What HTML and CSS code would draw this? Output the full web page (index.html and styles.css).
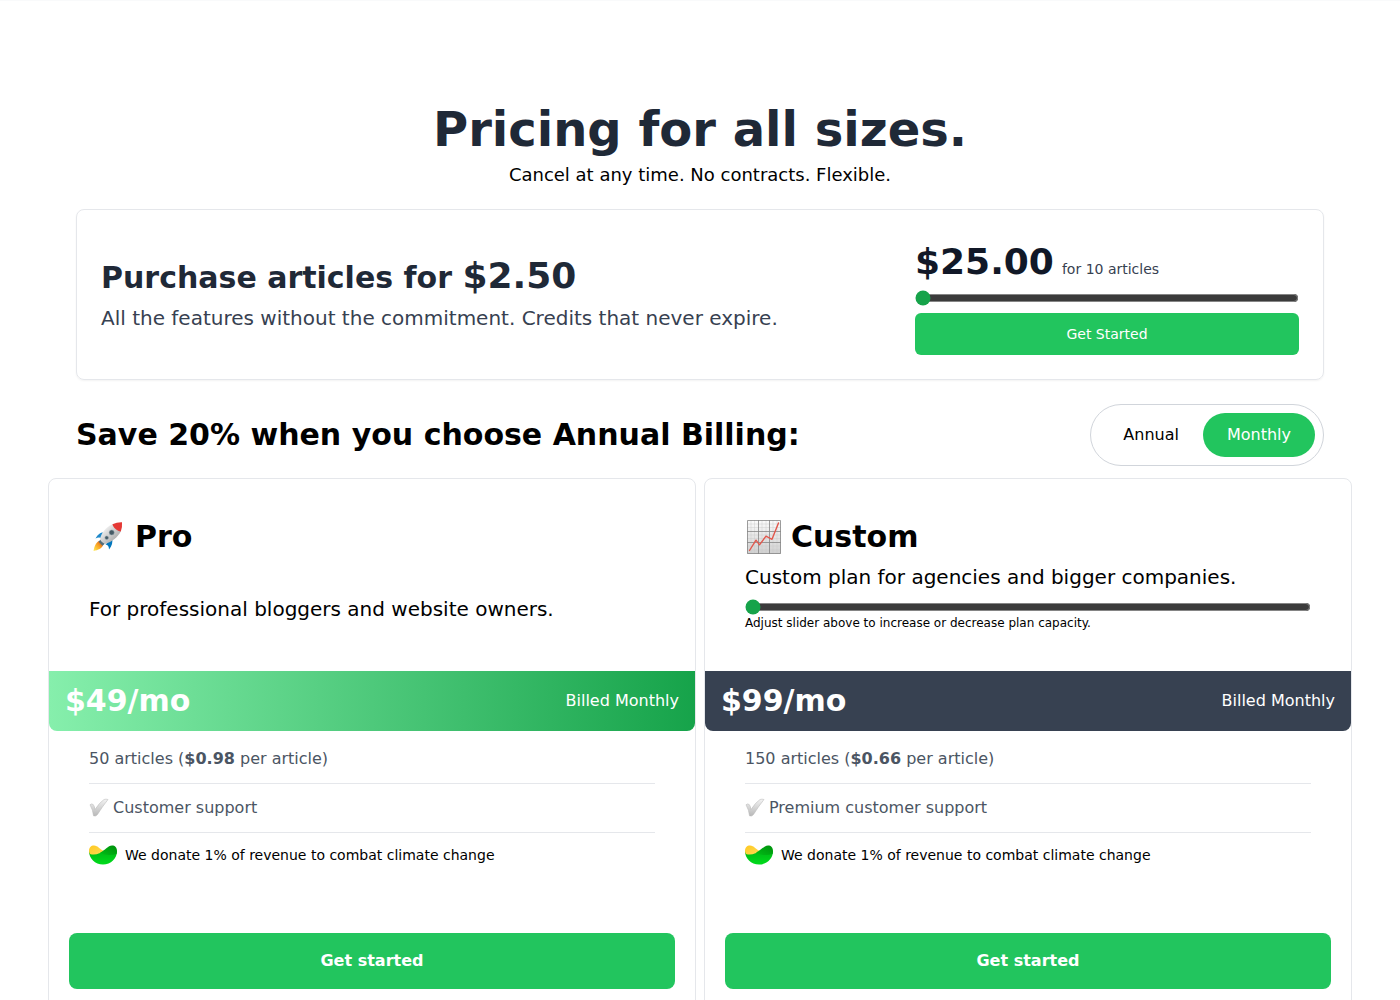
FILE: index.html
```
<!DOCTYPE html>
<html lang="en">
<head>
    <meta charset="UTF-8">
    <meta name="viewport" content="width=device-width, initial-scale=1.0">
    <title>Pricing</title>
    <link rel="stylesheet" href="styles.css">
</head>
<body>
    <main class="pricing">
        <header class="intro">
            <h1>Pricing for all sizes.</h1>
            <p>Cancel at any time. No contracts. Flexible.</p>
        </header>

        <section class="credits">
            <div class="credits-text">
                <h2>Purchase articles for <span class="unit-price">$2.50</span></h2>
                <p>All the features without the commitment. Credits that never expire.</p>
            </div>
            <div class="credits-buy">
                <div class="credits-total">
                    <strong id="credits-price">$25.00</strong>
                    <label for="credits-range">for <span id="credits-count">10</span> articles</label>
                </div>
                <input type="range" id="credits-range" class="slider" min="10" max="500" step="10" value="10">
                <button type="button" class="buy-btn">Get Started</button>
            </div>
        </section>

        <section class="billing">
            <h2>Save 20% when you choose Annual Billing:</h2>
            <div class="toggle">
                <button type="button" class="toggle-btn" aria-pressed="false">Annual</button>
                <button type="button" class="toggle-btn active" aria-pressed="true">Monthly</button>
            </div>
        </section>

        <section class="plans">
            <article class="plan">
                <div class="plan-head">
                    <h2>
                        <svg class="plan-icon" viewBox="0 0 36 36" aria-hidden="true">
                            <defs>
                                <linearGradient id="hull" x1="0" y1="0" x2="1" y2="1">
                                    <stop offset="0.200" stop-color="#f2f2f2"/>
                                    <stop offset="0.800" stop-color="#a9a9a9"/>
                                </linearGradient>
                                <linearGradient id="flame" x1="1" y1="0" x2="0" y2="1">
                                    <stop offset="0" stop-color="#d84315"/>
                                    <stop offset="0.500" stop-color="#f9a825"/>
                                    <stop offset="1" stop-color="#ffee58"/>
                                </linearGradient>
                            </defs>
                            <path fill="#1e88c9" d="M17 13C12 13 9 15 6.500 19.500C9 18.200 11 18.200 13 19.500Z"/>
                            <path fill="#0277bd" d="M23 19C24 23 23 27 20 30.500C20 27.500 19 26 16.500 25.500Z"/>
                            <path fill="url(#flame)" d="M10 22C6.500 24 5.500 27 4.500 32C9 31 13 29.500 14 26Z"/>
                            <path fill="#546e7a" d="M11.500 20.500L15.800 24.700L13.500 26.800L9.500 22.800Z"/>
                            <path fill="url(#hull)" d="M24 5C17 8 12 14 11 20.500Q12.500 23.500 16 25C23 23 29 18 32 12Z"/>
                            <path fill="#e53935" d="M23.500 5.200Q28 3 33 3.200Q33.500 8 31.800 12.500C28.500 12 24 8.500 23.500 5.200Z"/>
                            <circle fill="#455a64" stroke="#90a4ae" stroke-width="0.500" cx="22.700" cy="13.500" r="2.500"/>
                            <circle fill="#455a64" stroke="#90a4ae" stroke-width="0.500" cx="17.700" cy="18.800" r="1.800"/>
                        </svg>
                        Pro
                    </h2>
                    <div class="plan-about">
                        <p class="plan-desc">For professional bloggers and website owners.</p>
                    </div>
                </div>
                <div class="plan-price pro">
                    <strong>$49/mo</strong>
                    <span>Billed Monthly</span>
                </div>
                <ul class="features">
                    <li>50 articles (<b>$0.98</b> per article)</li>
                    <li class="support">
                        <svg class="check-icon" viewBox="0 0 20 20" aria-hidden="true">
                            <defs>
                                <linearGradient id="check" x1="0" y1="0" x2="0" y2="1">
                                    <stop offset="0" stop-color="#f3f3f3"/>
                                    <stop offset="1" stop-color="#b8b8b8"/>
                                </linearGradient>
                            </defs>
                            <path fill="url(#check)" stroke="#b5b5b5" stroke-width="0.500" d="M1 6.800Q2.500 5.200 4.200 6.500Q5.500 8 6 11.500Q10.500 4.500 15 1.500Q17 0.800 19 1.500Q13 9 8.500 16.500Q6.500 18.800 4.500 17.800Q4 12 1 6.800Z"/>
                        </svg>
                        Customer support
                    </li>
                    <li class="climate">
                        <svg class="climate-icon" viewBox="0 0 28 20" aria-hidden="true">
                            <defs>
                                <linearGradient id="bowl" x1="0" y1="0" x2="0" y2="1">
                                    <stop offset="0" stop-color="#00b815"/>
                                    <stop offset="1" stop-color="#00dc1c"/>
                                </linearGradient>
                                <linearGradient id="leaf" x1="1" y1="0" x2="0" y2="1">
                                    <stop offset="0" stop-color="#008f0c"/>
                                    <stop offset="1" stop-color="#00bd16"/>
                                </linearGradient>
                                <linearGradient id="sun" x1="0" y1="0" x2="1" y2="1">
                                    <stop offset="0" stop-color="#ffc820"/>
                                    <stop offset="1" stop-color="#ffdc58"/>
                                </linearGradient>
                            </defs>
                            <path fill="url(#bowl)" d="M0 6C0 13.500 6 19.500 14 19.500S28 13.500 28 6L14 7 8 7Z"/>
                            <path fill="url(#sun)" d="M0 6C0 2.500 2 0.500 5 0.500C9 0.500 11 4.500 14 5.500L16 6.500C11 7.500 7 11 1 9Q0 7.500 0 6Z"/>
                            <path fill="url(#leaf)" d="M28 6C28 2.500 26 0.500 23 0.500C19 0.500 16 5.500 11 7.500C16 10.500 22 10.500 27.500 9Q28 7.500 28 6Z"/>
                        </svg>
                        We donate 1% of revenue to combat climate change
                    </li>
                </ul>
                <button type="button" class="plan-btn">Get started</button>
            </article>

            <article class="plan">
                <div class="plan-head">
                    <h2>
                        <svg class="plan-icon" viewBox="0 0 36 36" aria-hidden="true">
                            <defs>
                                <linearGradient id="sheet" x1="0" y1="0" x2="0" y2="1">
                                    <stop offset="0" stop-color="#fcfcfc"/>
                                    <stop offset="1" stop-color="#cfcfcf"/>
                                </linearGradient>
                            </defs>
                            <path fill="url(#sheet)" d="M2 1H36V35H2Z"/>
                            <path fill="none" stroke="#c8c8c8" stroke-width="0.400" d="M2 5H36M2 8.500H36M2 16H36M2 19.500H36M2 27H36M2 31H36M6 1V35M9.500 1V35M17 1V35M21 1V35M28 1V35M32 1V35"/>
                            <path fill="none" stroke="#858585" stroke-width="0.800" d="M2 12.500H36M2 23.500H36M13.500 1V35M24.500 1V35M2.500 1.500H35.500V34.500H2.500Z"/>
                            <path fill="none" stroke="#e2574c" stroke-width="1.400" stroke-linejoin="round" stroke-linecap="round" d="M4.500 31.500L11 21.200L14.500 25.800L21 17.200L27 20.300L33.500 4"/>
                        </svg>
                        Custom
                    </h2>
                    <div class="plan-about">
                        <p class="plan-desc">Custom plan for agencies and bigger companies.</p>
                        <input type="range" id="plan-range" class="slider" min="150" max="2000" step="50" value="150">
                        <label for="plan-range">Adjust slider above to increase or decrease plan capacity.</label>
                    </div>
                </div>
                <div class="plan-price custom">
                    <strong>$99/mo</strong>
                    <span>Billed Monthly</span>
                </div>
                <ul class="features">
                    <li>150 articles (<b>$0.66</b> per article)</li>
                    <li class="support">
                        <svg class="check-icon" viewBox="0 0 20 20" aria-hidden="true">
                            <path fill="url(#check)" stroke="#b5b5b5" stroke-width="0.500" d="M1 6.800Q2.500 5.200 4.200 6.500Q5.500 8 6 11.500Q10.500 4.500 15 1.500Q17 0.800 19 1.500Q13 9 8.500 16.500Q6.500 18.800 4.500 17.800Q4 12 1 6.800Z"/>
                        </svg>
                        Premium customer support
                    </li>
                    <li class="climate">
                        <svg class="climate-icon" viewBox="0 0 28 20" aria-hidden="true">
                            <path fill="url(#bowl)" d="M0 6C0 13.500 6 19.500 14 19.500S28 13.500 28 6L14 7 8 7Z"/>
                            <path fill="url(#sun)" d="M0 6C0 2.500 2 0.500 5 0.500C9 0.500 11 4.500 14 5.500L16 6.500C11 7.500 7 11 1 9Q0 7.500 0 6Z"/>
                            <path fill="url(#leaf)" d="M28 6C28 2.500 26 0.500 23 0.500C19 0.500 16 5.500 11 7.500C16 10.500 22 10.500 27.500 9Q28 7.500 28 6Z"/>
                        </svg>
                        We donate 1% of revenue to combat climate change
                    </li>
                </ul>
                <button type="button" class="plan-btn">Get started</button>
            </article>
        </section>
    </main>

    <script>
        const range = document.getElementById('credits-range');

        range.addEventListener('input', () => {
            document.getElementById('credits-count').textContent = range.value;
            document.getElementById('credits-price').textContent = '$' + (range.value * 2.5).toFixed(2);
        });
    </script>
</body>
</html>
```
FILE: styles.css
```
* {
    box-sizing: border-box;
}

body {
    margin: 0;
    border-top: 1px solid #f9fafb;
    background: white;
    color: black;
    font-family: 'DejaVu Sans', sans-serif;
    font-size: 16px;
    line-height: 24px;
}

h1, h2, p, ul {
    margin: 0;
    padding: 0;
}

button {
    border: none;
    background: #22c55e;
    color: white;
    font-family: inherit;
    cursor: pointer;
}

.pricing {
    padding: 104px 48px 0;
}

.intro {
    text-align: center;
    margin-bottom: 20px;
}

.intro h1 {
    color: #1f2937;
    font-size: 48px;
    line-height: 48px;
    margin-bottom: 8px;
}

.intro p {
    font-size: 18px;
    line-height: 28px;
}

.credits {
    display: flex;
    justify-content: space-between;
    align-items: center;
    gap: 24px;
    margin: 0 28px 24px;
    padding: 24px;
    border: 1px solid #e5e7eb;
    border-radius: 8px;
    box-shadow: 0 1px 2px rgba(0, 0, 0, 0.05);
}

.credits h2 {
    color: #1f2937;
    font-size: 30px;
    line-height: 40px;
    margin-bottom: 6px;
}

.credits .unit-price {
    font-size: 36px;
    line-height: 36px;
}

.credits-text p {
    color: #374151;
    font-size: 20px;
    line-height: 28px;
}

.credits-buy {
    flex: 0 1 384px;
}

.credits-total {
    display: flex;
    align-items: baseline;
    gap: 8px;
    padding: 8px 0;
    color: #374151;
    font-size: 14px;
}

.credits-total strong {
    color: #111827;
    font-size: 36px;
    line-height: 40px;
}

.slider {
    display: block;
    width: 100%;
    height: 16px;
    margin: 0;
    accent-color: #16a34a;
}

.buy-btn {
    width: 100%;
    margin-top: 7px;
    padding: 11px;
    border-radius: 6px;
    font-size: 14px;
    line-height: 20px;
}

.billing {
    display: flex;
    justify-content: space-between;
    align-items: center;
    margin: 0 28px 12px;
}

.billing h2 {
    font-size: 30px;
    line-height: 36px;
}

.toggle {
    display: flex;
    padding: 8px;
    border: 1px solid #d1d5db;
    border-radius: 32px;
}

.toggle-btn {
    padding: 10px 24px;
    border-radius: 24px;
    background: none;
    color: black;
    font-size: 16px;
    line-height: 24px;
}

.toggle-btn.active {
    background: #22c55e;
    color: white;
}

.plans {
    display: grid;
    grid-template-columns: 1fr 1fr;
    gap: 8px;
}

.plan {
    display: flex;
    flex-direction: column;
    padding-bottom: 20px;
    border: 1px solid #e5e7eb;
    border-radius: 8px;
}

.plan-head {
    display: flex;
    flex: 1;
    flex-direction: column;
    padding: 40px;
}

.plan-head h2 {
    display: flex;
    align-items: center;
    gap: 10px;
    font-size: 30px;
    line-height: 36px;
    margin-bottom: 8px;
}

.plan-icon {
    width: 36px;
    height: 36px;
}

.plan-about {
    display: flex;
    flex: 1;
    flex-direction: column;
    justify-content: flex-end;
}

.plan-desc {
    font-size: 20px;
    line-height: 28px;
    margin-bottom: 8px;
}

.plan-about label {
    font-size: 12px;
    line-height: 16px;
}

.plan-price {
    display: flex;
    justify-content: space-between;
    align-items: center;
    padding: 12px 16px;
    border-radius: 0 0 8px 8px;
    color: white;
}

.plan-price strong {
    font-size: 30px;
    line-height: 36px;
}

.pro {
    background: linear-gradient(to right, #86efac, #16a34a);
}

.custom {
    background: #374151;
}

.features {
    padding: 4px 40px 0;
    margin-bottom: 56px;
    color: #4b5563;
    list-style: none;
}

.features li {
    padding: 12px 0;
    border-bottom: 1px solid #e5e7eb;
}

.features .support {
    display: flex;
    align-items: center;
    gap: 4px;
}

.check-icon {
    width: 20px;
    height: 20px;
}

.features .climate {
    display: flex;
    align-items: center;
    gap: 8px;
    padding: 10px 0;
    border-bottom: none;
    color: black;
    font-size: 14px;
}

.climate-icon {
    width: 28px;
    height: 20px;
}

.plan-btn {
    margin: 0 20px;
    padding: 16px;
    border-radius: 8px;
    font-size: 16px;
    font-weight: bold;
    line-height: 24px;
}

@media (max-width: 900px) {
    .pricing {
        padding: 48px 16px 0;
    }

    .credits, .billing {
        flex-direction: column;
        margin-left: 0;
        margin-right: 0;
    }

    .plans {
        grid-template-columns: 1fr;
    }
}
```
